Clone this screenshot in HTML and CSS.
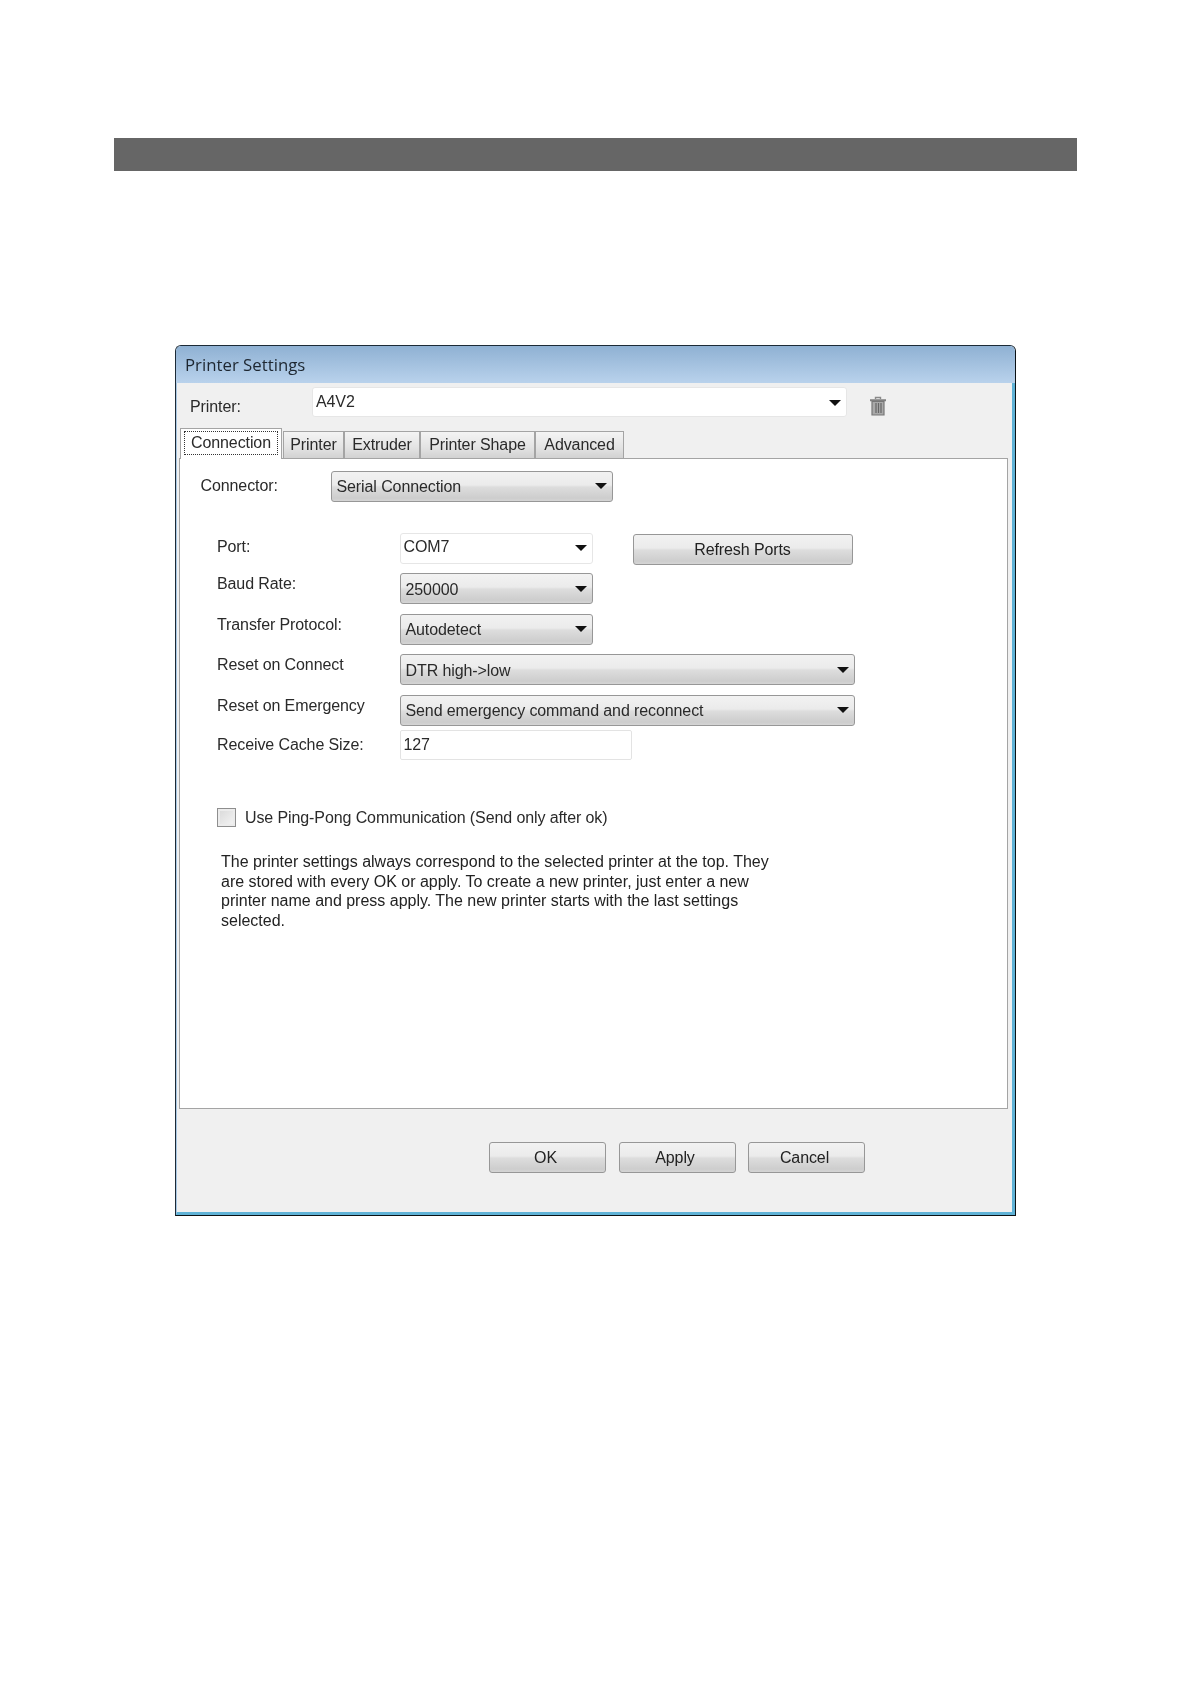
FILE: index.html
```html
<!DOCTYPE html>
<html lang="en">
<head>
<meta charset="utf-8">
<title>Printer Settings</title>
<link rel="stylesheet" href="styles.css">
</head>
<body>
<div class="bar"></div>
<div class="dialog">
  <div class="titlebar">Printer Settings</div>
  <div class="client">
    <div class="printer-row">
      <span class="printer-label">Printer:</span>
      <div class="combo edit printer-combo"><span class="combo-text">A4V2</span><i class="arrow"></i></div>
      <svg class="trash" viewBox="0 0 18 20" width="18" height="20"><path d="M6.5 3V1.5h5V3" fill="none" stroke="#8a8a8a" stroke-width="1.4"/><path d="M1 3.2h16v2H1z" fill="#7f7f7f"/><path d="M3 5.5h12V19H3z" fill="#a9a9a9" stroke="#777" stroke-width="1.2"/><path d="M7 7v10M9.5 7v10M12 7v10" stroke="#666" stroke-width="1.2"/></svg>
    </div>
    <div class="tabs">
      <div class="tab active"><span class="focus">Connection</span></div>
      <div class="tab tab-printer">Printer</div>
      <div class="tab tab-extruder">Extruder</div>
      <div class="tab tab-shape">Printer Shape</div>
      <div class="tab tab-advanced">Advanced</div>
    </div>
    <div class="panel">
      <div class="connector-row">
        <span class="connector-label">Connector:</span>
        <div class="combo list connector-combo"><span class="combo-text">Serial Connection</span><i class="arrow"></i></div>
      </div>
      <div class="form">
        <div class="row">
          <span class="label label-port">Port:</span>
          <div class="combo edit short"><span class="combo-text">COM7</span><i class="arrow"></i></div>
          <button class="btn refresh">Refresh Ports</button>
        </div>
        <div class="row">
          <span class="label">Baud Rate:</span>
          <div class="combo list short"><span class="combo-text">250000</span><i class="arrow"></i></div>
        </div>
        <div class="row">
          <span class="label">Transfer Protocol:</span>
          <div class="combo list short"><span class="combo-text">Autodetect</span><i class="arrow"></i></div>
        </div>
        <div class="row">
          <span class="label">Reset on Connect</span>
          <div class="combo list wide"><span class="combo-text">DTR high-&gt;low</span><i class="arrow"></i></div>
        </div>
        <div class="row">
          <span class="label">Reset on Emergency</span>
          <div class="combo list wide"><span class="combo-text">Send emergency command and reconnect</span><i class="arrow"></i></div>
        </div>
        <div class="row row-cache">
          <span class="label label-cache">Receive Cache Size:</span>
          <div class="textbox">127</div>
        </div>
      </div>
      <label class="check-row"><span class="check"></span>Use Ping-Pong Communication (Send only after ok)</label>
      <p class="help">The printer settings always correspond to the selected printer at the top. They<br>are stored with every OK or apply. To create a new printer, just enter a new<br>printer name and press apply. The new printer starts with the last settings<br>selected.</p>
    </div>
    <div class="actions">
      <button class="btn action">OK</button>
      <button class="btn action">Apply</button>
      <button class="btn action">Cancel</button>
    </div>
  </div>
</div>
</body>
</html>
```
FILE: styles.css
```css
* { box-sizing: border-box; }
html, body { margin: 0; padding: 0; background: #fff; }
body {
  height: 1684px;
  overflow: hidden;
  font-family: "Liberation Sans", Arial, sans-serif;
  font-size: 16px;
  letter-spacing: -0.1px;
  color: #2a2a2a;
}
.bar {
  height: 33px;
  margin: 138px 113px 0 114px;
  background: #666;
}
.dialog {
  width: 841px;
  height: 871px;
  margin: 174px 0 0 175px;
  display: flex;
  flex-direction: column;
  border: 1px solid #1c2a36;
  border-right: 1px solid #0b1114;
  border-bottom: 1px solid #0b1114;
  border-radius: 6px 6px 0 0;
  overflow: hidden;
  background: #f0f0f0;
  filter: blur(0.35px);
}
.titlebar {
  height: 37px;
  flex: none;
  padding: 8px 0 0 9px;
  font-family: "Open Sans", sans-serif;
  font-size: 16.8px;
  line-height: 22px;
  letter-spacing: 0;
  color: #1d2630;
  background: linear-gradient(#8fb1d3, #b9d2ec);
}
.client {
  flex: 1;
  display: flex;
  flex-direction: column;
  padding: 0 4px 0 2px;
  border-left: 1px solid #a9c8e4;
  border-right: 3px solid #5fb2d6;
  border-bottom: 3px solid #5fb2d6;
}
.printer-row {
  height: 45px;
  flex: none;
  display: flex;
  align-items: flex-start;
  padding-top: 4px;
}
.printer-label { width: 122px; margin: 11px 0 0 11px; flex: none; }
.printer-combo { width: 535px; height: 30px; padding-bottom: 0; }
.trash { margin: 9px 0 0 22px; }
.combo {
  display: flex;
  align-items: center;
  justify-content: space-between;
  flex: none;
  border-radius: 3px;
}
.combo-text { white-space: nowrap; }
.combo.edit {
  background: #fff;
  border: 1px solid #e6e6e6;
  padding: 0 5px 3px 3px;
}
.combo.printer-combo { padding: 0 5px 0 3px; }
.combo.edit .arrow { margin-top: 3px; }
.combo.printer-combo .arrow { margin-top: 2px; }
.combo.list {
  background: linear-gradient(#f2f2f2 0%, #ebebeb 45%, #dddddd 52%, #cdcdcd 90%, #d5d5d5 100%);
  border: 1.5px solid #979797;
  padding: 0 5px;
}
.combo.list .combo-text { margin-top: 2px; }
.arrow {
  display: block;
  width: 0;
  height: 0;
  border-left: 6px solid transparent;
  border-right: 6px solid transparent;
  border-top: 6px solid #111;
}
.tabs {
  height: 30px;
  flex: none;
  display: flex;
  align-items: flex-end;
  padding-left: 1px;
  position: relative;
  z-index: 1;
}
.tab {
  height: 27px;
  border: 1.5px solid #a4a4a4;
  border-bottom: 0;
  background: linear-gradient(#f4f4f4, #e3e3e3 60%, #d2d2d2);
  text-align: center;
  line-height: 25px;
  flex: none;
  white-space: nowrap;
}
.tab.active {
  width: 102px;
  height: 31px;
  margin-bottom: -1px;
  padding: 2px 3px 0;
  background: #fff;
}
.focus {
  display: block;
  height: 24px;
  line-height: 21px;
  border: 1.5px dotted #333;
}
.tab-printer { width: 61px; margin-left: 1px; }
.tab-extruder { width: 76px; }
.tab-shape { width: 115px; }
.tab-advanced { width: 89px; }
.panel {
  height: 651px;
  flex: none;
  background: #fff;
  border: 1.5px solid #a4a4a4;
  padding: 11.5px 0 0 1.5px;
}
.connector-row { display: flex; align-items: flex-start; }
.connector-label { width: 149px; padding-left: 19px; margin-top: 6px; flex: none; }
.connector-combo { width: 282px; height: 31px; }
.form {
  margin-top: 31px;
  display: grid;
  grid-auto-rows: 31px;
  row-gap: 9.5px;
  padding-left: 35.5px;
}
.row { display: flex; align-items: flex-start; }
.label { width: 182.5px; flex: none; line-height: 22px; white-space: nowrap; }
.label-port { margin-top: 3px; }
.short { width: 193px; height: 31px; }
.wide { width: 455px; height: 31px; }
.btn {
  font: inherit;
  letter-spacing: inherit;
  color: #222;
  background: linear-gradient(#f2f2f2 0%, #ebebeb 45%, #dddddd 52%, #cdcdcd 90%, #d5d5d5 100%);
  border: 1.5px solid #979797;
  border-radius: 3px;
  padding: 1px 0 0;
}
.refresh { width: 220px; height: 31px; margin: 1px 0 0 40px; }
.row-cache { margin-top: -5.5px; }
.label-cache { margin-top: 4px; }
.textbox {
  width: 232px;
  height: 30px;
  background: #fff;
  border: 1px solid #e3e3e3;
  padding: 5px 3px 0;
  border-radius: 2px;
}
.check-row {
  display: flex;
  align-items: center;
  height: 19px;
  margin: 42px 0 0 35.5px;
  white-space: nowrap;
}
.check {
  width: 19px;
  height: 19px;
  margin-right: 9px;
  border: 1.5px solid #8e8e8e;
  background: linear-gradient(135deg, #d8d8d8, #f5f5f5);
  box-shadow: inset 0 0 0 2px #ececec;
}
.help {
  margin: 25px 0 0 39.5px;
  line-height: 19.5px;
  letter-spacing: -0.01px;
  color: #222;
}
.actions {
  display: flex;
  gap: 12.5px;
  padding: 33px 0 0 310px;
}
.action { width: 117px; height: 31px; padding-right: 4px; }
```
